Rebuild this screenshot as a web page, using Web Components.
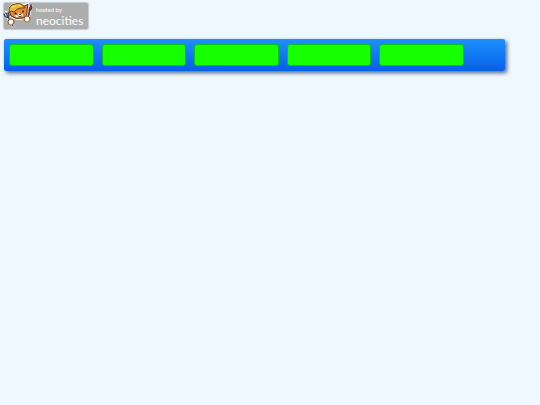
<!DOCTYPE html>
<html lang="en">
<head>
<meta charset="utf-8">
<title>Home</title>
<style>
body { margin: 0; background: #f0f8ff; font-family: "Liberation Sans", sans-serif; }
</style>
</head>
<body>
<site-page>
  <host-badge slot="badge"></host-badge>
  <nav-bar>
    <nav-button label="Page 1"></nav-button>
    <nav-button label="Page 2"></nav-button>
    <nav-button label="Page 3"></nav-button>
    <nav-button label="Page 4"></nav-button>
    <nav-button label="Page 5"></nav-button>
  </nav-bar>
</site-page>
<script>
function define(name, html, setup) {
  const template = document.createElement('template');
  template.innerHTML = html;
  customElements.define(name, class extends HTMLElement {
    constructor() {
      super();
      this.attachShadow({ mode: 'open' }).append(template.content.cloneNode(true));
    }
    connectedCallback() { if (setup) setup(this); }
  });
}

define('site-page', `
<style>
:host { display: flex; flex-direction: column; align-items: stretch; gap: 10px; padding: 3px 35px 8px 4px; }
header { display: flex; }
</style>
<header><slot name="badge"></slot></header>
<slot></slot>`);

define('host-badge', `
<style>
:host { display: block; }
a { display: flex; box-sizing: border-box; height: 26px; padding-right: 5px; border-radius: 2px;
    background: #adadad; box-shadow: 0 0 1px 1px #c4c8cc; color: #fff; text-decoration: none; }
svg { display: block; width: 32px; height: 26px; overflow: visible; }
.text { display: flex; flex-direction: column; padding-top: 3px; font-family: Lato, sans-serif; }
.small { font-size: 6px; line-height: 8px; }
.name { font-size: 12px; line-height: 14px; }
</style>
<a href="https://neocities.org">
<svg viewBox="4 3 32 26" aria-hidden="true">
  <g stroke-linecap="round" stroke-linejoin="round" fill="none">
    <path d="M4 14L6 17L9 16M6 12L8 16M7 17L13 26" stroke="#fff" stroke-width="2.5"/>
    <path d="M9 11Q10 4 17 4L24 5L28 4L27 10Q29 16 23 18Q16 20 11 16Z" stroke="#fff" stroke-width="2.5" fill="#fff"/>
    <path d="M31 6L28 18" stroke="#fff" stroke-width="3"/>
    <path d="M4 14Q5 18 8 17Q10 16 8 13M6 13L8 17L13 26" stroke="#3c434d" stroke-width="1.5"/>
    <path d="M10 10L11 6L20 5L25 6L28 4L27 10Q28 16 23 18Q16 20 11 16Q9 13 10 10Z" fill="#ea8734" stroke="#4a2b14"/>
    <path d="M18 12L20 14L23 14Q24 17 20 17Q17 18 15 16Q15 14 18 15Z" fill="#fff4df"/>
    <path d="M9 12Q8 5 15 4Q22 2 25 8Q18 7 14 12Q11 10 9 12Z" fill="#ebb636" stroke="#664512"/>
    <path d="M12 7L16 6M18 5L21 6" stroke="#ffdf68"/>
    <path d="M15 13L16 14M23 11L23 12" stroke="#35241c" stroke-width="1.5"/>
    <path d="M19 14L20 15L21 14M18 16Q20 18 22 16" stroke="#734529"/>
    <path d="M30 9L28 18" stroke="#3d2b28" stroke-width="1.5"/>
    <path d="M31 5Q33 7 31 10L29 11Q29 8 31 5Z" fill="#b72736" stroke="#5a2831"/>
    <circle cx="11" cy="22" r="3" fill="#fff" stroke="#755437"/>
    <path d="M9 24Q12 26 14 22" stroke="#e59b43"/>
    <circle cx="27" cy="19" r="3" fill="#fff" stroke="#755437"/>
    <path d="M25 21Q29 23 30 19" stroke="#e59b43"/>
  </g>
</svg>
<span class="text"><span class="small">hosted by</span><span class="name">neocities</span></span>
</a>`);

define('nav-bar', `
<style>
:host { display: block; }
nav { display: grid; grid-template-columns: repeat(5, minmax(0, 1fr)); gap: 8px; padding: 5px 41px 5px 5px;
      border-radius: 2px; background: linear-gradient(#1e90ff, #0560e8); box-shadow: 2px 2px 4px #4c6580; }
</style>
<nav aria-label="Main"><slot></slot></nav>`);

define('nav-button', `
<style>
:host { display: block; }
button { display: block; box-sizing: border-box; width: 100%; height: 22px; padding: 0; border: 1px solid #0cc01c;
         border-radius: 3px; background: #15ff00; }
</style>
<button type="button"></button>`, el => {
  el.shadowRoot.querySelector('button').setAttribute('aria-label', el.getAttribute('label'));
});
</script>
</body>
</html>
